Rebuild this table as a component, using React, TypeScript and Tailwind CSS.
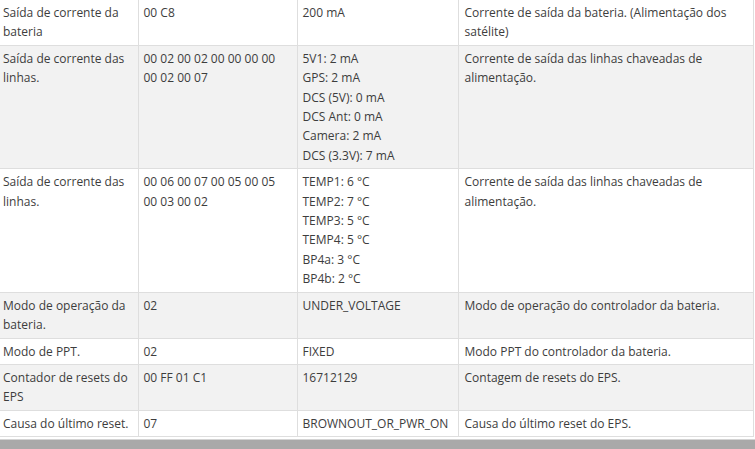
const rows: { field: string[]; raw: string[]; value: string[]; desc: string[] }[] = [
  {
    field: ['Saída de corrente da', 'bateria'],
    raw: ['00 C8'],
    value: ['200 mA'],
    desc: ['Corrente de saída da bateria. (Alimentação dos', 'satélite)'],
  },
  {
    field: ['Saída de corrente das', 'linhas.'],
    raw: ['00 02 00 02 00 00 00 00', '00 02 00 07'],
    value: ['5V1: 2 mA', 'GPS: 2 mA', 'DCS (5V): 0 mA', 'DCS Ant: 0 mA', 'Camera: 2 mA', 'DCS (3.3V): 7 mA'],
    desc: ['Corrente de saída das linhas chaveadas de', 'alimentação.'],
  },
  {
    field: ['Saída de corrente das', 'linhas.'],
    raw: ['00 06 00 07 00 05 00 05', '00 03 00 02'],
    value: ['TEMP1: 6 °C', 'TEMP2: 7 °C', 'TEMP3: 5 °C', 'TEMP4: 5 °C', 'BP4a: 3 °C', 'BP4b: 2 °C'],
    desc: ['Corrente de saída das linhas chaveadas de', 'alimentação.'],
  },
  {
    field: ['Modo de operação da', 'bateria.'],
    raw: ['02'],
    value: ['UNDER_VOLTAGE'],
    desc: ['Modo de operação do controlador da bateria.'],
  },
  {
    field: ['Modo de PPT.'],
    raw: ['02'],
    value: ['FIXED'],
    desc: ['Modo PPT do controlador da bateria.'],
  },
  {
    field: ['Contador de resets do', 'EPS'],
    raw: ['00 FF 01 C1'],
    value: ['16712129'],
    desc: ['Contagem de resets do EPS.'],
  },
  {
    field: ['Causa do último reset.'],
    raw: ['07'],
    value: ['BROWNOUT_OR_PWR_ON'],
    desc: ['Causa do último reset do EPS.'],
  },
];

function Lines({ lines }: { lines: string[] }) {
  return (
    <>
      {lines.map((l, i) => (
        <div key={i} className="whitespace-nowrap">
          {l}
        </div>
      ))}
    </>
  );
}

export default function App() {
  return (
    <div className="w-[755px] h-[449px] overflow-hidden bg-white font-['Open_Sans',sans-serif] text-[12px] leading-[19.4px] text-[#3d3d3d]">
      <table className="w-[753px] table-fixed border-collapse">
        <colgroup>
          <col className="w-[138px]" />
          <col className="w-[159px]" />
          <col className="w-[161px]" />
          <col className="w-[295px]" />
        </colgroup>
        <tbody>
          {rows.map((r, i) => (
            <tr key={i} className={i % 2 === 1 ? 'bg-[#f2f2f2]' : 'bg-white'}>
              <td className="border border-[#dedede] border-l-0 border-t-0 pl-[3px] pr-[5px] py-[3px] align-top">
                <Lines lines={r.field} />
              </td>
              <td className="border border-[#dedede] border-t-0 px-[5px] py-[3px] align-top">
                <Lines lines={r.raw} />
              </td>
              <td className="border border-[#dedede] border-t-0 px-[5px] py-[3px] align-top">
                <Lines lines={r.value} />
              </td>
              <td className="border border-[#dedede] border-t-0 pl-[6px] pr-[5px] py-[3px] align-top">
                <Lines lines={r.desc} />
              </td>
            </tr>
          ))}
        </tbody>
      </table>
      <div className="mt-[2px] h-[1px] bg-[#d4d4d4]" />
      <div className="h-[12px] bg-[#a9a9a9]" />
    </div>
  );
}
